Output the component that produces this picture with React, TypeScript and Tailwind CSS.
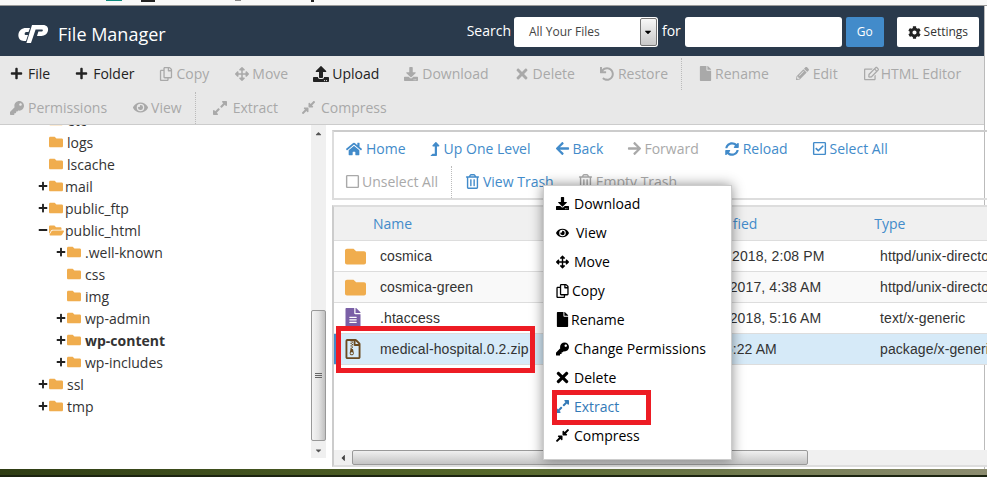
import { ReactNode } from "react";
import {
  FaArrowLeft, FaArrowRight, FaArrowsAlt, FaCaretDown, FaCaretLeft, FaCaretRight, FaCaretUp, FaCog, FaCompressAlt,
  FaDownload, FaExpandAlt, FaEye, FaFile, FaFileAlt, FaFolder, FaFolderOpen, FaHome, FaKey, FaLevelUpAlt, FaMinus,
  FaPencilAlt, FaPlus, FaRegCheckSquare, FaRegCopy, FaRegEdit, FaRegFileArchive, FaRegSquare, FaRegTrashAlt,
  FaSyncAlt, FaTimes, FaUndo, FaUpload,
} from "react-icons/fa";

function Tool({ icon, label, on, cls }: { icon: ReactNode; label: string; on?: boolean; cls: string }) {
  return (
    <span className={`flex items-center ${cls} ${on ? "text-[#222]" : "text-[#a9a9a9]"}`}>
      {icon}
      {label}
    </span>
  );
}

function Sep({ ml }: { ml: string }) {
  return <span className={`h-[32px] border-l border-dotted border-[#bbb] ${ml}`} />;
}

function TreeRow({ name, level, toggle, open, bold, gap }: { name: string; level: 1 | 2; toggle?: "plus" | "minus"; open?: boolean; bold?: boolean; gap: string }) {
  return (
    <div className={`flex items-center h-[22px] ${level === 1 ? "pl-[37px]" : "pl-[55px]"} text-[14px] text-[#333]`}>
      <span className="w-[12px] flex justify-center text-[#222]">
        {toggle === "plus" && <FaPlus size={10} />}
        {toggle === "minus" && <FaMinus size={10} />}
      </span>
      {open ? <FaFolderOpen size={15} className="text-[#f0ad4e]" /> : <FaFolder size={14} className="text-[#f0ad4e]" />}
      <span className={`${gap} ${bold ? "font-bold" : ""}`}>{name}</span>
    </div>
  );
}

function NavLink({ icon, label, cls, muted }: { icon: ReactNode; label: string; cls: string; muted?: boolean }) {
  return (
    <span className={`flex items-center ${cls} ${muted ? "text-[#a9a9a9]" : "text-[#428bca]"}`}>
      {icon}
      {label}
    </span>
  );
}

function FileRow({ icon, name, date, type, bg, dateCls }: { icon: ReactNode; name: string; date: string; type: string; bg: string; dateCls?: string }) {
  return (
    <div className={`flex items-center h-[31px] border-b border-[#ddd] text-[14px] tracking-[0.1px] text-[#333] font-['Liberation_Sans',sans-serif] ${bg}`}>
      <span className="w-[46px] pl-[11px] flex items-center">{icon}</span>
      <span className="w-[300px]">{name}</span>
      <span className={`w-[200px] pl-[7px] whitespace-nowrap ${dateCls ?? ""}`}>{date}</span>
      <span className="whitespace-nowrap">{type}</span>
    </div>
  );
}

function MenuItem({ icon, label, gap, blue }: { icon: ReactNode; label: string; gap: string; blue?: boolean }) {
  return (
    <div className={`flex items-center h-[29px] pl-[12px] ${blue ? "text-[#337ab7]" : "text-black"}`}>
      <span className="w-[13px] shrink-0 flex items-center">{icon}</span>
      <span className={gap}>{label}</span>
    </div>
  );
}

export default function App() {
  return (
    <div className="relative w-[987px] h-[477px] overflow-hidden bg-white font-['Open_Sans',sans-serif] text-[14px]">
      {/* cropped strip above the window */}
      <div className="h-[6px] bg-[#f8f8f8] border-b border-[#999] flex items-start pl-[106px]">
        <span className="w-[16px] h-[1px] bg-[#0f8a7e]" />
        <span className="w-[14px] h-[2px] bg-[#222] ml-[19px]" />
        <span className="w-[6px] h-[1px] bg-[#888] ml-[80px]" />
        <span className="w-[3px] h-[2px] bg-[#222] ml-[70px]" />
      </div>

      <div className="w-[985px] h-[463px] border-r border-[#bbb] flex flex-col">
        {/* header */}
        <div className="h-[50px] bg-[#2a3a4c] flex items-center text-white shrink-0">
          <svg width="31" height="20" viewBox="0 0 31 20" className="ml-[18px] mt-[6px]" fill="#fff">
            <path d="M8 4h4l-1.500 4H8.500c-1 0-1.600.6-1.800 1.400-.2 1 .4 1.600 1.300 1.600H10l-2 6H6c-3.600 0-6-2.600-5.600-6.400C.9 6.400 3.800 4 8 4z" />
            <path d="M14 1h11c3.600 0 5.600 2.400 5 5.600C29.400 10 26.800 12 23.400 12H19l1.400-4.400h3c.8 0 1.300-.3 1.400-1 .1-.6-.3-1-1-1H17.600L13 19H8.400L14 1z" />
          </svg>
          <span className="text-[18px] ml-[9px] mt-[6px]">File Manager</span>
          <span className="ml-[301px] -mt-[1px]">Search</span>
          <div className="ml-[3px] mt-[2px] w-[144px] h-[30px] bg-white rounded-[3px] flex items-center justify-between pl-[15px] pr-px text-[12px] text-[#444]">
            All Your Files
            <span className="w-[17px] h-[28px] border border-[#777] rounded-[2px] bg-gradient-to-b from-[#f8f8f8] to-[#c8c8c8] flex items-center justify-center text-black">
              <FaCaretDown size={10} />
            </span>
          </div>
          <span className="ml-[4px] -mt-[1px]">for</span>
          <div className="ml-[4px] mt-[2px] w-[157px] h-[30px] bg-white rounded-[3px]" />
          <div className="ml-[4px] mt-[2px] w-[38px] h-[30px] bg-[#428bca] rounded-[2px] flex items-center justify-center text-[12px]">Go</div>
          <div className="ml-[13px] mt-[2px] w-[82px] h-[30px] bg-white rounded-[2px] flex items-center justify-center gap-[3px] text-[12px] text-[#333]">
            <FaCog size={13} className="text-[#222]" /> Settings
          </div>
        </div>

        {/* toolbar */}
        <div className="h-[69px] bg-[#e8e8e8] border-b border-[#ccc] shrink-0">
          <div className="flex items-center h-[35px]">
            <Tool on cls="ml-[10px] gap-[5px]" icon={<FaPlus size={13} />} label="File" />
            <Tool on cls="ml-[25px] gap-[5px]" icon={<FaPlus size={13} />} label="Folder" />
            <Tool cls="ml-[24px] gap-[4px]" icon={<FaRegCopy size={14} />} label="Copy" />
            <Tool cls="ml-[26px] gap-[3px]" icon={<FaArrowsAlt size={14} />} label="Move" />
            <Tool on cls="ml-[25px] gap-[3px]" icon={<FaUpload size={16} />} label="Upload" />
            <Tool cls="ml-[25px] gap-[4px]" icon={<FaDownload size={14} />} label="Download" />
            <Tool cls="ml-[25px] gap-[3px]" icon={<FaTimes size={16} />} label="Delete" />
            <Tool cls="ml-[25px] gap-[4px]" icon={<FaUndo size={14} />} label="Restore" />
            <Sep ml="ml-[13px]" />
            <Tool cls="ml-[16px] gap-[2px]" icon={<FaFile size={15} />} label="Rename" />
            <Tool cls="ml-[27px] gap-[4px]" icon={<FaPencilAlt size={13} />} label="Edit" />
            <Tool cls="ml-[26px] gap-[2px]" icon={<FaRegEdit size={15} />} label="HTML Editor" />
          </div>
          <div className="flex items-center h-[33px]">
            <Tool cls="ml-[10px] gap-[4px]" icon={<FaKey size={14} />} label="Permissions" />
            <Tool cls="ml-[26px] gap-[3px]" icon={<FaEye size={15} />} label="View" />
            <Sep ml="ml-[13px]" />
            <Tool cls="ml-[16px] gap-[5px]" icon={<FaExpandAlt size={16} />} label="Extract" />
            <Tool cls="ml-[23px] gap-[5px]" icon={<FaCompressAlt size={15} />} label="Compress" />
          </div>
        </div>

        <div className="flex flex-1 min-h-0">
          {/* folder tree */}
          <div className="w-[326px] shrink-0 flex h-[333px]">
            <div className="w-[311px] overflow-hidden">
              <div className="-mt-[16px]">
                <TreeRow name="etc" level={1} gap="ml-[4px]" />
                <TreeRow name="logs" level={1} gap="ml-[4px]" />
                <TreeRow name="lscache" level={1} gap="ml-[4px]" />
                <TreeRow name="mail" level={1} toggle="plus" gap="ml-[2px]" />
                <TreeRow name="public_ftp" level={1} toggle="plus" gap="ml-[2px]" />
                <TreeRow name="public_html" level={1} toggle="minus" open gap="ml-[1px]" />
                <TreeRow name=".well-known" level={2} toggle="plus" gap="ml-[4px]" />
                <TreeRow name="css" level={2} gap="ml-[4px]" />
                <TreeRow name="img" level={2} gap="ml-[4px]" />
                <TreeRow name="wp-admin" level={2} toggle="plus" gap="ml-[4px]" />
                <TreeRow name="wp-content" level={2} toggle="plus" bold gap="ml-[4px]" />
                <TreeRow name="wp-includes" level={2} toggle="plus" gap="ml-[4px]" />
                <TreeRow name="ssl" level={1} toggle="plus" gap="ml-[4px]" />
                <TreeRow name="tmp" level={1} toggle="plus" gap="ml-[4px]" />
              </div>
            </div>
            <div className="w-[15px] bg-[#f0f0f0] flex flex-col items-center text-[#555] text-[9px]">
              <FaCaretUp className="mt-[4px]" />
              <div className="mt-[172px] w-[15px] h-[131px] rounded-[2px] border border-[#999] bg-gradient-to-r from-[#f4f4f4] via-[#e4e4e4] to-[#c0c0c0] flex flex-col items-center justify-center gap-[1px]">
                <span className="w-[7px] border-t border-[#666]" />
                <span className="w-[7px] border-t border-[#666]" />
                <span className="w-[7px] border-t border-[#666]" />
              </div>
              <FaCaretDown className="mt-[5px]" />
            </div>
          </div>

          {/* file panel */}
          <div className="flex-1 ml-[6px] mr-[5px] pt-[5px] flex flex-col">
            <div className="h-[70px] border-2 border-[#ddd] border-t-[#ccc] shrink-0">
              <div className="flex items-center h-[33px]">
                <NavLink cls="ml-[12px] gap-[4px]" icon={<FaHome size={16} />} label="Home" />
                <NavLink cls="ml-[22px] gap-[2px]" icon={<FaLevelUpAlt size={14} />} label="Up One Level" />
                <NavLink cls="ml-[24px] gap-[3px]" icon={<FaArrowLeft size={15} />} label="Back" />
                <NavLink cls="ml-[24px] gap-[2px]" muted icon={<FaArrowRight size={15} />} label="Forward" />
                <NavLink cls="ml-[26px] gap-[4px]" icon={<FaSyncAlt size={14} />} label="Reload" />
                <NavLink cls="ml-[24px] gap-[3px]" icon={<FaRegCheckSquare size={15} />} label="Select All" />
              </div>
              <div className="flex items-center h-[33px]">
                <NavLink cls="ml-[11px] gap-[2px]" muted icon={<FaRegSquare size={15} />} label="Unselect All" />
                <Sep ml="ml-[13px]" />
                <NavLink cls="ml-[13px] gap-[3px]" icon={<FaRegTrashAlt size={15} />} label="View Trash" />
                <NavLink cls="ml-[24px] gap-[3px]" muted icon={<FaRegTrashAlt size={15} />} label="Empty Trash" />
              </div>
            </div>
            <div className="h-[262px] mt-[5px] border-2 border-[#ddd] border-l-[#ccc] flex flex-col overflow-hidden">
              <div className="flex items-center h-[34px] shrink-0 bg-[#f0f0f0] border-b border-[#ddd] text-[#428bca]">
                <span className="ml-[39px]">Name</span>
                <span className="ml-[257px]">Last Modified</span>
                <span className="ml-[117px]">Type</span>
              </div>
              <FileRow bg="bg-white" icon={<FaFolder size={21} className="text-[#f0ad4e]" />} name="cosmica" date="Nov 3, 2018, 2:08 PM" type="httpd/unix-directory" />
              <FileRow bg="bg-[#f9f9f9]" icon={<FaFolder size={21} className="text-[#f0ad4e]" />} name="cosmica-green" date="Jan 2, 2017, 4:38 AM" type="httpd/unix-directory" />
              <FileRow bg="bg-white" icon={<FaFileAlt size={20} className="text-[#7a5fa6] -ml-[2px]" />} name=".htaccess" date="Jan 9, 2018, 5:16 AM" type="text/x-generic" />
              <FileRow bg="bg-[#d6eaf8] shadow-[inset_2px_0_0_#428bca]" dateCls="-ml-[7px] mr-[7px]" icon={<FaRegFileArchive size={20} className="text-[#6a4a20] -ml-[2px]" />} name="medical-hospital.0.2.zip" date="Today, 5:22 AM" type="package/x-generic" />
              <div className="flex-1" />
              <div className="h-[15px] bg-[#f0f0f0] flex items-center text-[#444] text-[10px] shrink-0">
                <FaCaretLeft className="ml-[4px]" />
                <div className="ml-[4px] w-[456px] h-[15px] rounded-[2px] border border-[#999] bg-gradient-to-b from-[#f0f0f0] to-[#c4c4c4]" />
                <FaCaretRight className="ml-auto mr-[6px]" />
              </div>
            </div>
          </div>
        </div>
      </div>

      {/* desktop showing under the window */}
      <div className="absolute left-0 bottom-0 w-full h-[8px] bg-gradient-to-r from-[#2f3d14] via-[#56682a] to-[#8d8d70] border-b-2 border-[#1c2410]" />

      {/* context menu */}
      <div className="absolute left-[543px] top-[185px] w-[189px] h-[275px] bg-white border border-[#ccc] shadow-[0_0_12px_rgba(0,0,0,0.45)] pt-[3px]">
        <MenuItem icon={<FaDownload size={15} />} label="Download" gap="ml-[5px]" />
        <MenuItem icon={<FaEye size={16} />} label="View" gap="ml-[7px]" />
        <MenuItem icon={<FaArrowsAlt size={14} />} label="Move" gap="ml-[5px]" />
        <MenuItem icon={<FaRegCopy size={14} />} label="Copy" gap="ml-[3px]" />
        <MenuItem icon={<FaFile size={15} />} label="Rename" gap="ml-[2px]" />
        <MenuItem icon={<FaKey size={14} />} label="Change Permissions" gap="ml-[5px]" />
        <MenuItem icon={<FaTimes size={17} />} label="Delete" gap="ml-[5px]" />
        <MenuItem blue icon={<FaExpandAlt size={15} />} label="Extract" gap="ml-[5px]" />
        <MenuItem icon={<FaCompressAlt size={15} />} label="Compress" gap="ml-[5px]" />
      </div>

      {/* red annotation boxes */}
      <div className="absolute left-[336px] top-[326px] w-[199px] h-[47px] border-[5px] border-[#ed1c24]" />
      <div className="absolute left-[552px] top-[390px] w-[99px] h-[35px] border-[5px] border-[#ed1c24]" />
    </div>
  );
}
